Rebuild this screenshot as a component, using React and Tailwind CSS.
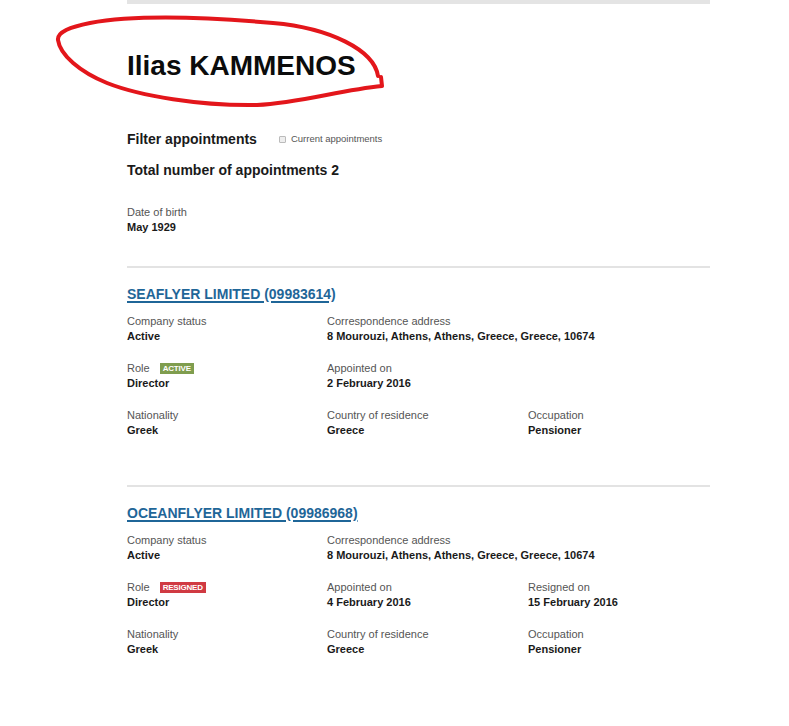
import React from 'react';

const appointments = [
  {
    name: 'SEAFLYER LIMITED (09983614)',
    status: 'Active',
    address: '8 Mourouzi, Athens, Athens, Greece, Greece, 10674',
    role: 'Director',
    badge: 'ACTIVE',
    appointed: '2 February 2016',
    resigned: null,
    nationality: 'Greek',
    residence: 'Greece',
    occupation: 'Pensioner',
  },
  {
    name: 'OCEANFLYER LIMITED (09986968)',
    status: 'Active',
    address: '8 Mourouzi, Athens, Athens, Greece, Greece, 10674',
    role: 'Director',
    badge: 'RESIGNED',
    appointed: '4 February 2016',
    resigned: '15 February 2016',
    nationality: 'Greek',
    residence: 'Greece',
    occupation: 'Pensioner',
  },
];

const Field = ({ label, value, badge }) => (
  <div>
    <div className="flex items-center h-[15px] text-[11px] leading-[15px] text-[#555]">
      {label}
      {badge}
    </div>
    <div className="text-[11px] leading-[15px] font-bold text-[#1a1a1a]">{value}</div>
  </div>
);

const Badge = ({ kind }) => (
  <span
    className={
      'ml-[10px] inline-flex items-center h-[11px] px-[3px] text-[8px] font-bold leading-none text-white tracking-tight ' +
      (kind === 'ACTIVE' ? 'bg-[#7f9d4e]' : 'bg-[#d03a42]')
    }
  >
    {kind}
  </span>
);

const Appointment = ({ a }) => (
  <section>
    <div className="h-[2px] bg-[#e3e3e3]" />
    <a href="#" className="block mt-[16px] text-[14px] leading-[20px] font-bold text-[#1f6698] underline decoration-[1.5px] underline-offset-2">
      {a.name}
    </a>
    <div className="mt-[10.5px] grid grid-cols-[200px_201px_182px] gap-y-[17px]">
      <Field label="Company status" value={a.status} />
      <div className="col-span-2">
        <Field label="Correspondence address" value={a.address} />
      </div>
      <Field label="Role" value={a.role} badge={<Badge kind={a.badge} />} />
      <Field label="Appointed on" value={a.appointed} />
      {a.resigned ? <Field label="Resigned on" value={a.resigned} /> : <div />}
      <Field label="Nationality" value={a.nationality} />
      <Field label="Country of residence" value={a.residence} />
      <Field label="Occupation" value={a.occupation} />
    </div>
  </section>
);

export default function App() {
  return (
    <main className="relative min-h-[726px] bg-white font-['Liberation_Sans',Arial,sans-serif] text-[#111]">
      <div className="ml-[127px] w-[583px]">
        <div className="h-[4px] bg-[#e4e4e4]" />

        <h1 className="mt-[45px] text-[28px] leading-[34px] font-bold text-[#0b0c0c]">Ilias KAMMENOS</h1>

        <div className="mt-[46px] flex items-center h-[20px]">
          <span className="text-[14px] font-bold text-[#1a1a1a]">Filter appointments</span>
          <label className="ml-[22px] flex items-center gap-[5px] text-[9.5px] text-[#555]">
            <span className="inline-block w-[7px] h-[7px] border border-[#bbb] bg-[#eee] rounded-[1px]" />
            Current appointments
          </label>
        </div>

        <p className="mt-[11px] text-[14px] leading-[20px] font-bold text-[#1a1a1a]">Total number of appointments 2</p>

        <div className="mt-[24.5px]">
          <Field label="Date of birth" value="May 1929" />
        </div>

        <div className="mt-[31px]">
          <Appointment a={appointments[0]} />
        </div>
        <div className="mt-[46.5px]">
          <Appointment a={appointments[1]} />
        </div>
      </div>

      <svg className="absolute left-0 top-0 pointer-events-none" width="789" height="726" viewBox="0 0 789 726">
        <path
          d="M378 76 C374 50 330 28 273 23 S140 14 90 23 C70 27 57 32 58 40 C60 55 80 72 107 83 C140 96 200 106 257 105 C300 103 340 90 382 86 L381 77"
          fill="none"
          stroke="#e3161b"
          strokeWidth="4"
          strokeLinecap="round"
          strokeLinejoin="round"
        />
      </svg>
    </main>
  );
}
